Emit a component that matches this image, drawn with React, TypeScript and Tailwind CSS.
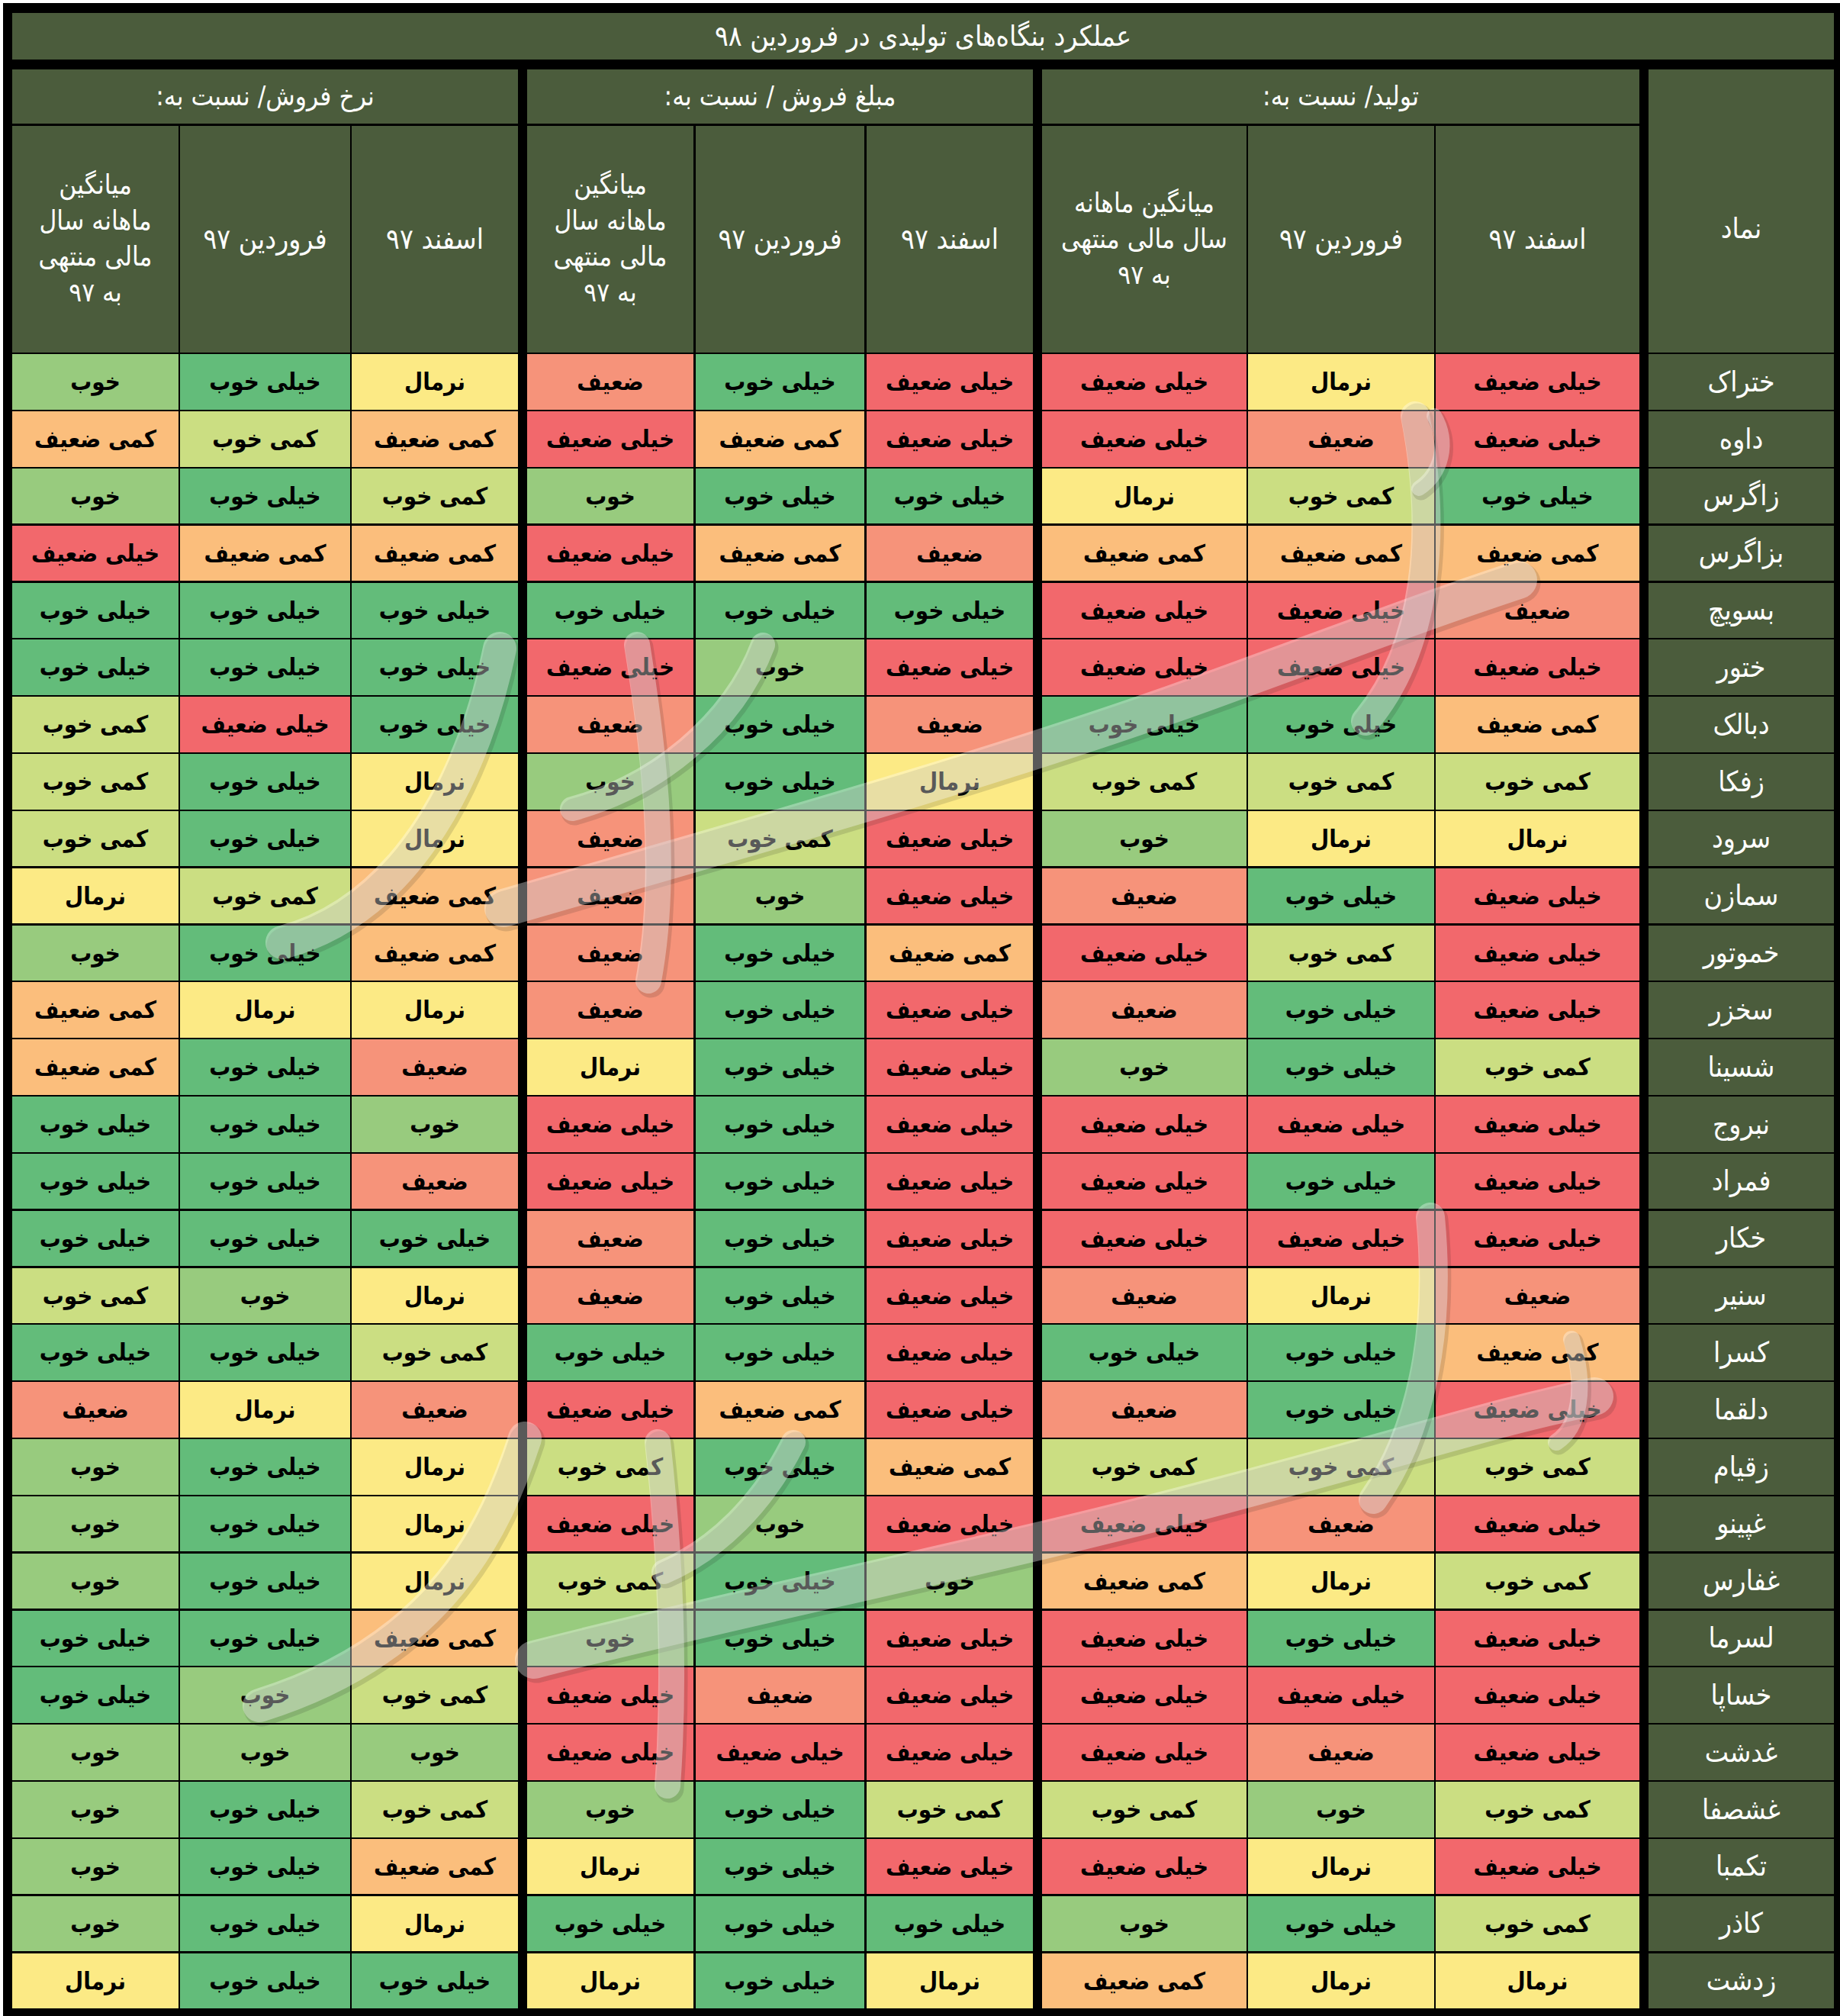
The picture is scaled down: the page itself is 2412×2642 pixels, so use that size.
import React from "react";

const LV: Record<string, { t: string; c: string }> = {
  KZ: { t: "خیلی ضعیف", c: "bg-[#f2686c]" },
  Z: { t: "ضعیف", c: "bg-[#f6937a]" },
  kZ: { t: "کمی ضعیف", c: "bg-[#fbbe7c]" },
  N: { t: "نرمال", c: "bg-[#fcea85]" },
  kK: { t: "کمی خوب", c: "bg-[#cbde82]" },
  K: { t: "خوب", c: "bg-[#98cb7e]" },
  KK: { t: "خیلی خوب", c: "bg-[#63bc7a]" },
};

const rows: [string, string][] = [
  ["ختراک", "KZ N KZ KZ KK Z N KK K"],
  ["داوه", "KZ Z KZ KZ kZ KZ kZ kK kZ"],
  ["زاگرس", "KK kK N KK KK K kK KK K"],
  ["بزاگرس", "kZ kZ kZ Z kZ KZ kZ kZ KZ"],
  ["بسویچ", "Z KZ KZ KK KK KK KK KK KK"],
  ["ختور", "KZ KZ KZ KZ K KZ KK KK KK"],
  ["دبالک", "kZ KK KK Z KK Z KK KZ kK"],
  ["زفکا", "kK kK kK N KK K N KK kK"],
  ["سرود", "N N K KZ kK Z N KK kK"],
  ["سمازن", "KZ KK Z KZ K Z kZ kK N"],
  ["خموتور", "KZ kK KZ kZ KK Z kZ KK K"],
  ["سخزر", "KZ KK Z KZ KK Z N N kZ"],
  ["شسینا", "kK KK K KZ KK N Z KK kZ"],
  ["نبروج", "KZ KZ KZ KZ KK KZ K KK KK"],
  ["فمراد", "KZ KK KZ KZ KK KZ Z KK KK"],
  ["خکار", "KZ KZ KZ KZ KK Z KK KK KK"],
  ["سنیر", "Z N Z KZ KK Z N K kK"],
  ["کسرا", "kZ KK KK KZ KK KK kK KK KK"],
  ["دلقما", "KZ KK Z KZ kZ KZ Z N Z"],
  ["زقیام", "kK kK kK kZ KK kK N KK K"],
  ["غپینو", "KZ Z KZ KZ K KZ N KK K"],
  ["غفارس", "kK N kZ K KK kK N KK K"],
  ["لسرما", "KZ KK KZ KZ KK K kZ KK KK"],
  ["خساپا", "KZ KZ KZ KZ Z KZ kK K KK"],
  ["غدشت", "KZ Z KZ KZ KZ KZ K K K"],
  ["غشصفا", "kK K kK kK KK K kK KK K"],
  ["تکمبا", "KZ N KZ KZ KK N kZ KK K"],
  ["کاذر", "kK KK K KK KK KK N KK K"],
  ["زدشت", "N N kZ N KK N KK KK N"],
];

// widths per group, right to left
const groups = [
  { title: "تولید/ نسبت به:", gap: "gap-[2px]", w: ["w-[267px]", "w-[244px]", "w-[268px]"], wide: true },
  { title: "مبلغ فروش / نسبت به:", gap: "gap-[3px]", w: ["w-[218px]", "w-[221px]", "w-[218px]"], wide: false },
  { title: "نرخ فروش/ نسبت به:", gap: "gap-[2px]", w: ["w-[218px]", "w-[223px]", "w-[218px]"], wide: false },
];

const green = "bg-[#4b5c3c]";

function Stroke({ d, w }: { d: string; w: number }) {
  return (
    <g>
      <path d={d} transform="translate(3 4)" fill="none" stroke="rgba(30,30,30,0.14)" strokeWidth={w + 3} strokeLinecap="round" />
      <path d={d} fill="none" stroke="rgba(255,255,255,0.34)" strokeWidth={w} strokeLinecap="round" />
    </g>
  );
}

function Watermark() {
  return (
    <svg className="absolute inset-0 pointer-events-none" width="2412" height="2642" viewBox="0 0 2412 2642">
      <Stroke d="M 660 1190 C 900 1120, 1300 1010, 1600 900 S 1900 790, 1990 760" w={50} />
      <Stroke d="M 1855 545 C 1885 700, 1870 850, 1790 945" w={38} />
      <Stroke d="M 835 845 C 860 1000, 875 1150, 850 1285" w={34} />
      <Stroke d="M 655 850 C 625 1000, 540 1190, 370 1235" w={44} />
      <Stroke d="M 1000 845 C 960 950, 860 1030, 750 1060" w={32} />
      <Stroke d="M 1880 545 C 1900 580, 1890 620, 1860 640" w={20} />
      <Stroke d="M 700 2175 C 950 2110, 1300 2040, 1600 1960 S 1950 1860, 2090 1830" w={50} />
      <Stroke d="M 1875 1595 C 1890 1750, 1860 1880, 1800 1965" w={38} />
      <Stroke d="M 2060 1755 C 2080 1820, 2070 1870, 2040 1890" w={22} />
      <Stroke d="M 688 1885 C 650 2000, 580 2160, 340 2235" w={44} />
      <Stroke d="M 862 1890 C 880 2050, 885 2200, 875 2340" w={34} />
      <Stroke d="M 1040 1890 C 1000 1970, 940 2030, 870 2060" w={32} />
    </svg>
  );
}

export default function App() {
  return (
    <div className="relative w-[2412px] h-[2642px] bg-white pt-[4px] pl-[4px] font-['DejaVu_Sans_Condensed','DejaVu_Sans',sans-serif]">
      <div dir="rtl" className="w-[2408px] h-[2638px] bg-black pt-[13px] pr-[8px] pl-[12px] flex flex-col">
        <div className={`${green} h-[61px] flex items-center justify-center text-white text-[37px]`}>
          عملکرد بنگاه‌های تولیدی در فروردین ۹۸
        </div>
        <div className="mt-[13px] h-[371px] flex gap-[12px]">
          <div className={`${green} w-[243px] pt-[46px] flex items-center justify-center text-white text-[37px]`}>نماد</div>
          {groups.map((g) => (
            <div key={g.title} className="flex flex-col gap-[2.5px]">
              <div className={`${green} h-[71px] flex items-center justify-center text-white text-[35px]`}>{g.title}</div>
              <div className={`flex-1 flex ${g.gap}`}>
                <div className={`${green} ${g.w[0]} flex items-center justify-center text-white text-[37px]`}>اسفند ۹۷</div>
                <div className={`${green} ${g.w[1]} flex items-center justify-center text-white text-[37px]`}>فروردین ۹۷</div>
                <div className={`${green} ${g.w[2]} flex items-center justify-center text-center text-white text-[35px] leading-[47px]`}>
                  {g.wide ? (
                    <span>
                      میانگین ماهانه
                      <br />
                      سال مالی منتهی
                      <br />
                      به ۹۷
                    </span>
                  ) : (
                    <span>
                      میانگین
                      <br />
                      ماهانه سال
                      <br />
                      مالی منتهی
                      <br />
                      به ۹۷
                    </span>
                  )}
                </div>
              </div>
            </div>
          ))}
        </div>
        <div className="mt-[2.33px] flex flex-col gap-[2.33px]">
          {rows.map(([name, vals]) => {
            const v = vals.split(" ");
            return (
              <div key={name} className="h-[72.5px] flex gap-[12px]">
                <div className={`${green} w-[243px] flex items-center justify-center text-white text-[37px]`}>{name}</div>
                {groups.map((g, gi) => (
                  <div key={gi} className={`flex ${g.gap}`}>
                    {[0, 1, 2].map((ci) => {
                      const lv = LV[v[gi * 3 + ci]];
                      return (
                        <div key={ci} className={`${lv.c} ${g.w[ci]} flex items-center justify-center text-black font-bold text-[31px]`}>
                          {lv.t}
                        </div>
                      );
                    })}
                  </div>
                ))}
              </div>
            );
          })}
        </div>
      </div>
      <Watermark />
    </div>
  );
}
